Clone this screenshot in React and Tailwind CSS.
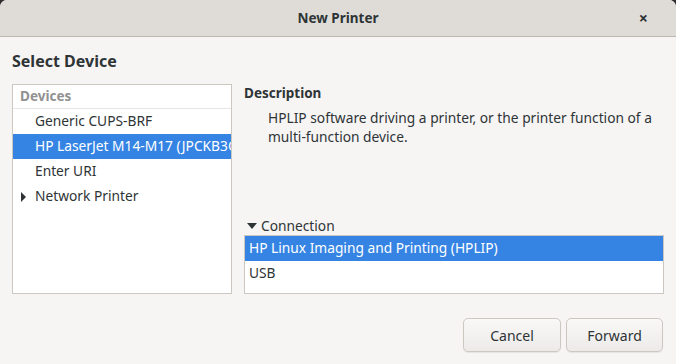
export default function App() {
  const devices = [
    { name: "Generic CUPS-BRF" },
    { name: "HP LaserJet M14-M17 (JPCKB3Q8J3)", selected: true },
    { name: "Enter URI" },
    { name: "Network Printer", expandable: true },
  ];

  return (
    <div
      className="w-[676px] h-[364px] bg-[#2d2d2d] text-[#2e3436] overflow-hidden"
      style={{ fontFamily: '"Noto Sans", "DejaVu Sans", sans-serif' }}
    >
      <div className="w-full h-full rounded-t-[7px] overflow-hidden bg-[#f6f5f4] flex flex-col">
        {/* Title bar */}
        <div className="relative h-[37px] shrink-0 bg-[#dfdcd8] border-b border-[#bfb8b1] flex items-center justify-center">
          <span className="text-[13.5px] font-bold">New Printer</span>
          <span className="absolute right-[28px] top-[9px] text-[16px] font-bold leading-[18px]">
            ×
          </span>
        </div>

        <div className="flex-1 flex flex-col px-3">
          <div className="h-[47px] pt-[13px] text-[16px] font-bold leading-[22px]">
            Select Device
          </div>

          <div className="flex gap-3 h-[210px]">
            {/* Device list */}
            <div className="w-[220px] shrink-0 bg-white border border-[#cdc7c2] overflow-hidden text-[13.75px]">
              <div className="h-[24px] flex items-center px-[7px] text-[13.5px] text-[#919191] font-bold border-b border-[#e8e6e3]">
                Devices
              </div>
              {devices.map((d) => (
                <div
                  key={d.name}
                  className={
                    "h-[25px] flex items-center pl-[8px] whitespace-nowrap " +
                    (d.selected ? "bg-[#3584e4] text-white" : "")
                  }
                >
                  <span className="w-[14px] shrink-0 flex items-center">
                    {d.expandable && (
                      <svg width="5" height="10" viewBox="0 0 5 10">
                        <path d="M0 0 L5 5 L0 10 Z" fill="#2e3436" />
                      </svg>
                    )}
                  </span>
                  <span>{d.name}</span>
                </div>
              ))}
            </div>

            {/* Description + connection */}
            <div className="flex-1 flex flex-col text-[13.75px]">
              <div className="h-[18px] leading-[18px] text-[13.5px] font-bold">Description</div>
              <div className="pl-[24px] pt-[6px] leading-[19px]">
                HPLIP software driving a printer, or the printer function of a
                multi-function device.
              </div>
              <div className="flex-1" />
              <div className="h-[18px] flex items-center gap-[4px] pl-[3px]">
                <svg width="10" height="6" viewBox="0 0 10 6">
                  <path d="M0 0 L10 0 L5 6 Z" fill="#2e3436" />
                </svg>
                <span>Connection</span>
              </div>
              <div className="h-[59px] bg-white border border-[#cdc7c2] overflow-hidden">
                <div className="h-[25px] flex items-center px-[4px] bg-[#3584e4] text-white">
                  HP Linux Imaging and Printing (HPLIP)
                </div>
                <div className="h-[25px] flex items-center px-[4px]">USB</div>
              </div>
            </div>
          </div>

          {/* Buttons */}
          <div className="flex justify-end gap-[5px] pt-[24px] pr-[1px]">
            <button className="w-[98px] h-[34px] rounded-[5px] border border-[#cdc7c2] bg-gradient-to-b from-[#f9f8f7] to-[#edebe9] text-[14px] text-[#2e3436] shadow-[0_1px_1px_rgba(0,0,0,0.07)]">
              Cancel
            </button>
            <button className="w-[97px] h-[34px] rounded-[5px] border border-[#cdc7c2] bg-gradient-to-b from-[#f9f8f7] to-[#edebe9] text-[14px] text-[#2e3436] shadow-[0_1px_1px_rgba(0,0,0,0.07)]">
              Forward
            </button>
          </div>
        </div>
      </div>
    </div>
  );
}
